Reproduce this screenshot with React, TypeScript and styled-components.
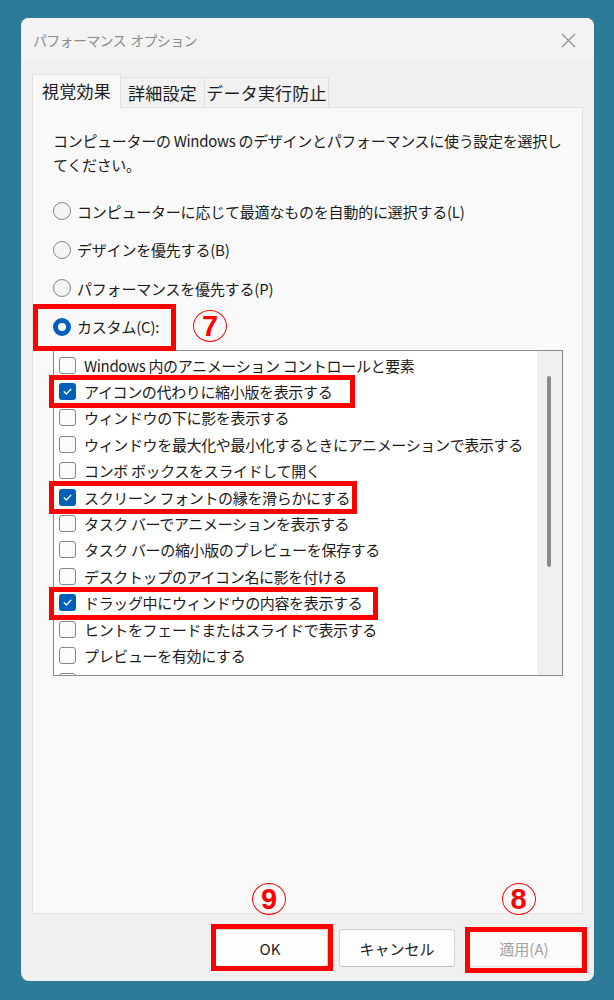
import React from "react";
import styled, { createGlobalStyle } from "styled-components";

const GlobalStyle = createGlobalStyle`
  html, body {
    margin: 0;
    padding: 0;
    background: #2e7b99;
  }
  body {
    font-family: "Noto Sans CJK JP", "Noto Sans", sans-serif;
    color: #1b1b1b;
  }
`;

const Desktop = styled.div`
  width: 614px;
  height: 1000px;
  box-sizing: border-box;
  padding: 18px 0 0 21px;
  background: #2e7b99;
`;

const Window = styled.div`
  position: relative;
  width: 573px;
  height: 963px;
  background: #f0f0f0;
  border-radius: 8px;
  display: flex;
  flex-direction: column;
  overflow: hidden;
`;

const TitleBar = styled.div`
  flex: none;
  height: 44px;
  background: #f3f3f3;
  display: flex;
  align-items: center;
  justify-content: space-between;
  padding: 0 18px 0 12px;
`;

const Title = styled.span`
  font-size: 14px;
  letter-spacing: -0.7px;
  word-spacing: 2px;
  color: #8c8c8c;
`;

const CloseButton = styled.span`
  display: flex;
  width: 15px;
  height: 15px;
`;

const Body = styled.div`
  flex: 1;
  display: flex;
  flex-direction: column;
  padding: 12px 11px 0 11px;
  min-height: 0;
`;

const TabStrip = styled.div`
  flex: none;
  height: 33px;
  display: flex;
  align-items: flex-end;
`;

const Tab = styled.div<{ $active?: boolean; $width: number }>`
  box-sizing: border-box;
  width: ${(p) => p.$width}px;
  height: ${(p) => (p.$active ? 34 : 30)}px;
  margin-bottom: ${(p) => (p.$active ? -1 : 0)}px;
  position: relative;
  z-index: ${(p) => (p.$active ? 1 : 0)};
  display: flex;
  align-items: center;
  justify-content: center;
  padding-bottom: ${(p) => (p.$active ? 2 : 0)}px;
  font-size: 17px;
  letter-spacing: 0.2px;
  background: ${(p) => (p.$active ? "#f9f9f9" : "#f2f2f2")};
  border: 1px solid #e2e2e2;
  border-bottom: none;
  margin-left: ${(p) => (p.$active ? 0 : -1)}px;
`;

const Panel = styled.div`
  flex: 1;
  min-height: 0;
  background: #f9f9f9;
  border: 1px solid #e2e2e2;
  padding: 21px 19px 0 20px;
  display: flex;
  flex-direction: column;
`;

const Description = styled.p`
  margin: 0;
  font-size: 15px;
  line-height: 24px;
  letter-spacing: -0.3px;
`;

const DescLine = styled.span`
  display: block;
  white-space: nowrap;
`;

const RadioGroup = styled.div`
  margin-top: 15px;
  display: flex;
  flex-direction: column;
`;

const RadioRow = styled.label`
  position: relative;
  height: 38.5px;
  display: flex;
  align-items: center;
  gap: 6px;
  font-size: 15px;
  letter-spacing: -0.2px;
`;

const RadioMark = styled.span<{ $checked?: boolean }>`
  box-sizing: border-box;
  width: 18px;
  height: 18px;
  border-radius: 50%;
  flex: none;
  display: flex;
  align-items: center;
  justify-content: center;
  border: ${(p) => (p.$checked ? "none" : "1px solid #858585")};
  background: ${(p) => (p.$checked ? "#005fb8" : "#f5f5f5")};
  &::after {
    content: "";
    display: ${(p) => (p.$checked ? "block" : "none")};
    width: 8px;
    height: 8px;
    border-radius: 50%;
    background: #ffffff;
  }
`;

const ListFrame = styled.div`
  position: relative;
  margin-top: 4px;
  width: 510px;
  height: 326px;
  flex: none;
`;

const ListBox = styled.div`
  box-sizing: border-box;
  width: 100%;
  height: 100%;
  border: 1px solid #868a94;
  background: #ffffff;
  display: flex;
`;

const Rows = styled.div`
  flex: 1;
  overflow: hidden;
  padding-top: 1px;
`;

const Row = styled.div`
  height: 26.4px;
  display: flex;
  align-items: center;
  gap: 8px;
  padding-left: 5px;
  font-size: 15px;
  letter-spacing: -0.35px;
  white-space: nowrap;
`;

const CheckMark = styled.span<{ $checked?: boolean }>`
  box-sizing: border-box;
  width: 17px;
  height: 17px;
  flex: none;
  border-radius: 3px;
  display: flex;
  align-items: center;
  justify-content: center;
  border: ${(p) => (p.$checked ? "none" : "1px solid #868686")};
  background: ${(p) => (p.$checked ? "#005fb8" : "#fbfbfb")};
`;

const ScrollTrack = styled.div`
  flex: none;
  width: 25px;
  background: #f0f0f0;
  display: flex;
  justify-content: center;
  padding-top: 25px;
  box-sizing: border-box;
`;

const ScrollThumb = styled.div`
  width: 4px;
  height: 191px;
  border-radius: 2px;
  background: #8a8a8a;
  margin-left: -1px;
`;

const Footer = styled.div`
  flex: none;
  height: 67px;
  box-sizing: border-box;
  padding: 15px 1px 0 0;
  display: flex;
  justify-content: flex-end;
  align-items: flex-start;
  gap: 11px;
`;

const Button = styled.button<{ $disabled?: boolean }>`
  position: relative;
  box-sizing: border-box;
  width: 116px;
  height: 38px;
  border-radius: 4px;
  border: 1px solid ${(p) => (p.$disabled ? "#e3e3e3" : "#d0d0d0")};
  border-bottom-color: ${(p) => (p.$disabled ? "#e3e3e3" : "#bdbdbd")};
  background: ${(p) => (p.$disabled ? "#fbfbfb" : "#fdfdfd")};
  color: ${(p) => (p.$disabled ? "#a2a2a2" : "#1b1b1b")};
  font-family: "Noto Sans CJK JP", "Noto Sans", sans-serif;
  font-size: 15px;
  padding: 0;
`;

/* red callout frames drawn over the controls */
const Highlight = styled.span<{
  $top: number;
  $left: number;
  $width: number;
  $height: number;
}>`
  position: absolute;
  box-sizing: border-box;
  top: ${(p) => p.$top}px;
  left: ${(p) => p.$left}px;
  width: ${(p) => p.$width}px;
  height: ${(p) => p.$height}px;
  border: 5px solid #ff0000;
  pointer-events: none;
  z-index: 5;
`;

/* circled step numbers */
const StepBadge = styled.span<{ $top: number; $left: number }>`
  position: absolute;
  top: ${(p) => p.$top}px;
  left: ${(p) => p.$left}px;
  box-sizing: border-box;
  width: 34px;
  height: 32px;
  border: 1.5px solid #ff0000;
  border-radius: 50%;
  display: flex;
  align-items: center;
  justify-content: center;
  color: #ff0000;
  font-family: "Liberation Sans", Arial, sans-serif;
  font-weight: 700;
  font-size: 29px;
  line-height: 1;
  letter-spacing: 0;
  pointer-events: none;
  z-index: 6;
`;

const ROW_H = 26.4;

const items: { label: string; checked?: boolean; frame?: number }[] = [
  { label: "Windows 内のアニメーション コントロールと要素" },
  { label: "アイコンの代わりに縮小版を表示する", checked: true, frame: 306 },
  { label: "ウィンドウの下に影を表示する" },
  { label: "ウィンドウを最大化や最小化するときにアニメーションで表示する" },
  { label: "コンボ ボックスをスライドして開く" },
  { label: "スクリーン フォントの縁を滑らかにする", checked: true, frame: 308 },
  { label: "タスク バーでアニメーションを表示する" },
  { label: "タスク バーの縮小版のプレビューを保存する" },
  { label: "デスクトップのアイコン名に影を付ける" },
  { label: "ドラッグ中にウィンドウの内容を表示する", checked: true, frame: 329 },
  { label: "ヒントをフェードまたはスライドで表示する" },
  { label: "プレビューを有効にする" },
  { label: "マウス ポインターの下に影を表示する" },
];

const radios = [
  { label: "コンピューターに応じて最適なものを自動的に選択する(L)" },
  { label: "デザインを優先する(B)" },
  { label: "パフォーマンスを優先する(P)" },
];

const Check = () => (
  <svg width="11" height="11" viewBox="0 0 11 11" fill="none">
    <path
      d="M2.2 5.8 L4.4 8 L8.8 3.2"
      stroke="#ffffff"
      strokeWidth="1.3"
      strokeLinecap="round"
      strokeLinejoin="round"
    />
  </svg>
);

const CloseIcon = () => (
  <svg width="15" height="15" viewBox="0 0 15 15" fill="none">
    <path d="M1 1 L14 14 M14 1 L1 14" stroke="#8c8c8c" strokeWidth="1.1" />
  </svg>
);

export default function App() {
  return (
    <>
      <GlobalStyle />
      <Desktop>
        <Window>
          <TitleBar>
            <Title>パフォーマンス オプション</Title>
            <CloseButton>
              <CloseIcon />
            </CloseButton>
          </TitleBar>
          <Body>
            <TabStrip>
              <Tab $active $width={89}>
                視覚効果
              </Tab>
              <Tab $width={85}>詳細設定</Tab>
              <Tab $width={125}>データ実行防止</Tab>
            </TabStrip>
            <Panel>
              <Description>
                <DescLine>
                  コンピューターの Windows のデザインとパフォーマンスに使う設定を選択し
                </DescLine>
                <DescLine>てください。</DescLine>
              </Description>
              <RadioGroup>
                {radios.map((r) => (
                  <RadioRow key={r.label}>
                    <RadioMark />
                    {r.label}
                  </RadioRow>
                ))}
                <RadioRow>
                  <RadioMark $checked />
                  カスタム(C):
                  <Highlight $top={-3.5} $left={-20} $width={143} $height={47} />
                  <StepBadge $top={2.5} $left={140}>7</StepBadge>
                </RadioRow>
              </RadioGroup>
              <ListFrame>
                <ListBox>
                  <Rows>
                    {items.map((it) => (
                      <Row key={it.label}>
                        <CheckMark $checked={it.checked}>
                          {it.checked && <Check />}
                        </CheckMark>
                        {it.label}
                      </Row>
                    ))}
                  </Rows>
                  <ScrollTrack>
                    <ScrollThumb />
                  </ScrollTrack>
                </ListBox>
                {items.map((it, i) =>
                  it.frame ? (
                    <Highlight
                      key={it.label}
                      $top={i * ROW_H - 1}
                      $left={-4.5}
                      $width={it.frame}
                      $height={33}
                    />
                  ) : null
                )}
              </ListFrame>
            </Panel>
            <Footer>
              <Button>
                OK
                <Highlight $top={-6} $left={-2} $width={122} $height={47} />
                <StepBadge $top={-47} $left={39}>9</StepBadge>
              </Button>
              <Button>キャンセル</Button>
              <Button $disabled>
                適用(A)
                <Highlight $top={-3} $left={-2} $width={122} $height={46} />
                <StepBadge $top={-47} $left={34.5}>8</StepBadge>
              </Button>
            </Footer>
          </Body>
        </Window>
      </Desktop>
    </>
  );
}
